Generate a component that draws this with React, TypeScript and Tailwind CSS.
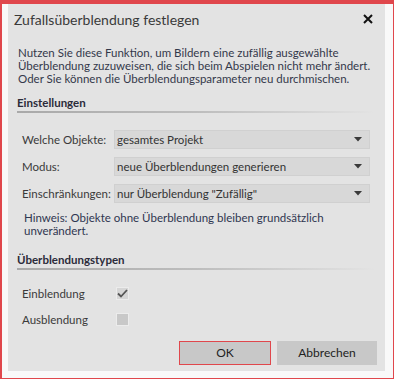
import React from "react";

const font = { fontFamily: 'Lato, "Noto Sans", "Liberation Sans", sans-serif' };

function Select({ value }: { value: string }) {
  return (
    <div className="flex-1 h-[19px] bg-[#d8d8d8] border border-[#d0d0d0] flex items-center justify-between pl-[2px] pr-[7px] text-[11.5px] text-[#333] whitespace-nowrap">
      <span className="leading-none">{value}</span>
      <svg width="8" height="5" viewBox="0 0 8 5">
        <polygon points="0,0 8,0 4,4.5" fill="#3a3a3a" />
      </svg>
    </div>
  );
}

function Row({ label, value, first }: { label: string; value: string; first?: boolean }) {
  return (
    <div className={`flex items-center pl-[14px] pr-[15px] ${first ? "mt-[17px]" : "mt-[8px]"}`}>
      <div className="w-[92px] shrink-0 text-[11.5px] text-[#3a3a3a] whitespace-nowrap">{label}</div>
      <Select value={value} />
    </div>
  );
}

function Heading({ text, mt }: { text: string; mt: string }) {
  return (
    <div className={`${mt} pl-[9px] pr-[10px]`}>
      <div className="text-[11.5px] font-bold leading-[15px] text-[#2b2b3a] whitespace-nowrap">{text}</div>
      <div className="mt-[1px] h-[2px] bg-gradient-to-r from-[#a9a9a9] via-[#bdbdbd] to-[#e3e3e3]" />
    </div>
  );
}

export default function App() {
  return (
    <div
      style={font}
      className="w-[394px] h-[379px] border-t-4 border-l-2 border-r border-b border-[#e0474c] bg-[#f9f9f9] pl-[6px] pr-[8px] pb-[7px] flex flex-col"
    >
      <div className="flex-1 bg-[#e3e3e3] flex flex-col">
        <div className="h-[30px] shrink-0 flex items-center justify-between pl-[6px] pr-[12px]">
          <span className="text-[14px] text-[#3a3a3a] whitespace-nowrap">Zufallsüberblendung festlegen</span>
          <svg width="10" height="10" viewBox="0 0 10 10">
            <path d="M1 1 L9 9 M9 1 L1 9" stroke="#111" strokeWidth="2" />
          </svg>
        </div>
        <div className="mt-[12px] pl-[10px] text-[11.5px] leading-[13px] text-[#33384a] whitespace-nowrap">
          Nutzen Sie diese Funktion, um Bildern eine zufällig ausgewählte
          <br />
          Überblendung zuzuweisen, die sich beim Abspielen nicht mehr ändert.
          <br />
          Oder Sie können die Überblendungsparameter neu durchmischen.
        </div>
        <Heading text="Einstellungen" mt="mt-[10px]" />
        <Row label="Welche Objekte:" value="gesamtes Projekt" first />
        <Row label="Modus:" value="neue Überblendungen generieren" />
        <Row label="Einschränkungen:" value={'nur Überblendung "Zufällig"'} />
        <div className="mt-[8px] pl-[16px] text-[11.5px] leading-[13px] text-[#2f3650] whitespace-nowrap">
          Hinweis: Objekte ohne Überblendung bleiben grundsätzlich
          <br />
          unverändert.
        </div>
        <Heading text="Überblendungstypen" mt="mt-[15px]" />
        <div className="mt-[17px] flex items-center pl-[14px] h-[13px]">
          <div className="w-[94px] text-[11.5px] text-[#3a3a3a]">Einblendung</div>
          <div className="w-[13px] h-[13px] bg-[#d6d6d6] border border-[#ececec] flex items-center justify-center">
            <svg width="11" height="9" viewBox="0 0 11 9">
              <path d="M1 4.5 L4 7.5 L10 1" stroke="#555" strokeWidth="1.8" fill="none" />
            </svg>
          </div>
        </div>
        <div className="mt-[13px] flex items-center pl-[14px] h-[13px]">
          <div className="w-[94px] text-[11.5px] text-[#3a3a3a]">Ausblendung</div>
          <div className="w-[13px] h-[13px] bg-[#c8c8c8] border border-[#ececec]" />
        </div>
        <div className="mt-[15px] flex justify-end gap-[6px] pr-[8px]">
          <button className="w-[92px] h-[24px] bg-[#c8c8c8] border border-[#e0474c] text-[12px] text-[#222]">OK</button>
          <button className="w-[100px] h-[24px] bg-[#c8c8c8] text-[12px] text-[#222]">Abbrechen</button>
        </div>
      </div>
    </div>
  );
}
